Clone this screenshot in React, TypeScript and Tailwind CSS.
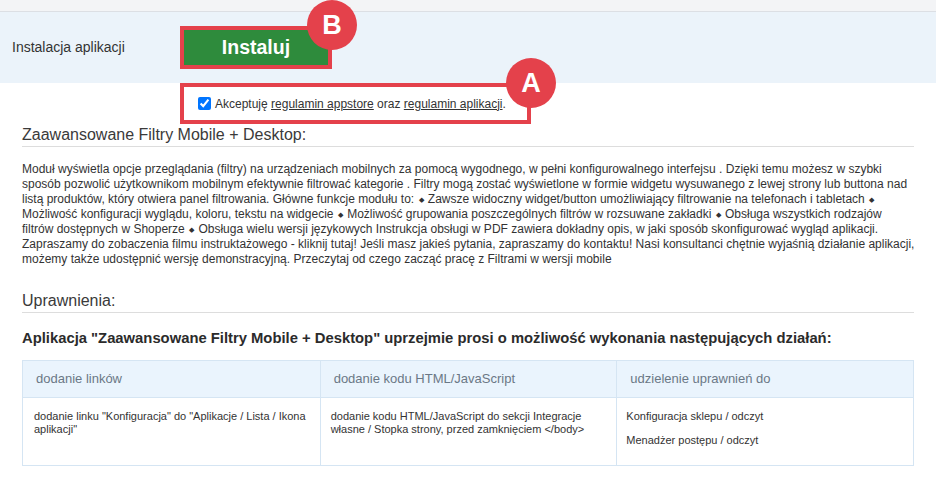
import React from "react";

const red = "border-[#e4414b]";

function Badge({ letter, className }: { letter: string; className: string }) {
  return (
    <div
      className={
        "absolute w-[50px] h-[50px] rounded-full bg-[#e4414b] flex items-center justify-center text-white font-bold text-[27px] font-['Liberation_Sans',Arial,sans-serif] " +
        className
      }
    >
      {letter}
    </div>
  );
}

const Dot = () => <span className="text-[7px] align-[1px] mx-[1px]">◆</span>;

const bodyLines: React.ReactNode[] = [
  "Moduł wyświetla opcje przeglądania (filtry) na urządzeniach mobilnych za pomocą wygodnego, w pełni konfigurowalnego interfejsu . Dzięki temu możesz w szybki",
  "sposób pozwolić użytkownikom mobilnym efektywnie filtrować kategorie . Filtry mogą zostać wyświetlone w formie widgetu wysuwanego z lewej strony lub buttona nad",
  <>
    listą produktów, który otwiera panel filtrowania. Główne funkcje modułu to: <Dot /> Zawsze widoczny widget/button umożliwiający filtrowanie na telefonach i tabletach <Dot />
  </>,
  <>
    Możliwość konfiguracji wyglądu, koloru, tekstu na widgecie <Dot /> Możliwość grupowania poszczególnych filtrów w rozsuwane zakładki <Dot /> Obsługa wszystkich rodzajów
  </>,
  <>
    filtrów dostępnych w Shoperze <Dot /> Obsługa wielu wersji językowych Instrukcja obsługi w PDF zawiera dokładny opis, w jaki sposób skonfigurować wygląd aplikacji.
  </>,
  "Zapraszamy do zobaczenia filmu instruktażowego - kliknij tutaj! Jeśli masz jakieś pytania, zapraszamy do kontaktu! Nasi konsultanci chętnie wyjaśnią działanie aplikacji,",
  "możemy także udostępnić wersję demonstracyjną. Przeczytaj od czego zacząć pracę z Filtrami w wersji mobile",
];

export default function App() {
  return (
    <div className="w-[936px] h-[479px] overflow-hidden bg-white text-[#333] font-['Liberation_Sans',Arial,sans-serif]">
      {/* top strip */}
      <div className="h-[12px] bg-[#f3f4f6] border-b border-[#dcdfe4]" />

      {/* install band */}
      <div className="h-[71px] bg-[#ebf3fa] flex items-center">
        <div className="w-[180px] pl-[12px] text-[14px]">Instalacja aplikacji</div>
        <div className={"relative w-[152px] h-[43px] border-[4px] " + red}>
          <button
            type="button"
            className="w-full h-full bg-[#2e8b3c] text-white font-bold text-[19.5px]"
          >
            Instaluj
          </button>
          <Badge letter="B" className="-right-[29px] -top-[30px]" />
        </div>
      </div>

      {/* terms */}
      <div className={"relative ml-[180px] w-[351px] h-[41px] border-[4px] flex items-center pl-[14px] gap-[4px] text-[12px] " + red}>
        <input type="checkbox" defaultChecked readOnly className="w-[13px] h-[13px] accent-[#0075ff]" />
        <span className="whitespace-nowrap">
          Akceptuję <span className="underline">regulamin appstore</span> oraz{" "}
          <span className="underline">regulamin aplikacji</span>.
        </span>
        <Badge letter="A" className="-right-[29px] -top-[29px]" />
      </div>

      <div className="px-[22px]">
        <h2 className="pt-[1px] pb-[1px] leading-[20px] text-[16px] text-[#3a3a3a] border-b border-[#dddddd]">
          Zaawansowane Filtry Mobile + Desktop:
        </h2>

        <div className="mt-[15px] text-[12px] leading-[15px] whitespace-nowrap">
          {bodyLines.map((l, i) => (
            <div key={i}>{l}</div>
          ))}
        </div>

        <h2 className="mt-[23px] pt-[1px] pb-[1px] leading-[20px] text-[16px] text-[#3a3a3a] border-b border-[#dddddd]">
          Uprawnienia:
        </h2>

        <h3 className="mt-[15px] leading-[20px] text-[14.8px] font-bold text-[#2b2b2b] whitespace-nowrap">
          Aplikacja "Zaawansowane Filtry Mobile + Desktop" uprzejmie prosi o możliwość wykonania następujących działań:
        </h3>

        <div className="mt-[12px] border border-[#d5e5f3] grid grid-cols-3">
          <div className="h-[37px] bg-[#eaf4fd] border-b border-[#d5e5f3] flex items-center pl-[13px] text-[13px] text-[#6b7886]">
            dodanie linków
          </div>
          <div className="h-[37px] bg-[#eaf4fd] border-b border-l border-[#d5e5f3] flex items-center pl-[13px] text-[13px] text-[#6b7886]">
            dodanie kodu HTML/JavaScript
          </div>
          <div className="h-[37px] bg-[#eaf4fd] border-b border-l border-[#d5e5f3] flex items-center pl-[13px] text-[13px] text-[#6b7886]">
            udzielenie uprawnień do
          </div>
          <div className="h-[67px] pt-[12px] pl-[11px] text-[11px] leading-[13px] whitespace-nowrap">
            dodanie linku "Konfiguracja" do "Aplikacje / Lista / Ikona
            <br />
            aplikacji"
          </div>
          <div className="h-[67px] pt-[12px] pl-[10px] border-l border-[#d5e5f3] text-[11px] leading-[13px] whitespace-nowrap">
            dodanie kodu HTML/JavaScript do sekcji Integracje
            <br />
            własne / Stopka strony, przed zamknięciem &lt;/body&gt;
          </div>
          <div className="h-[67px] pt-[12px] pl-[9px] border-l border-[#d5e5f3] text-[11px] leading-[13px] flex flex-col gap-[11px]">
            <p>Konfiguracja sklepu / odczyt</p>
            <p>Menadżer postępu / odczyt</p>
          </div>
        </div>
      </div>
    </div>
  );
}
